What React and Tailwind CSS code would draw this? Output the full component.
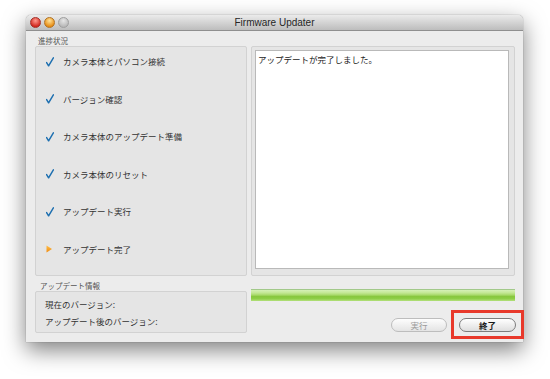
import React from "react";

const jp = "font-['Noto_Sans_CJK_JP','Liberation_Sans',sans-serif]";

const steps = [
  { label: "カメラ本体とパソコン接続", done: true },
  { label: "バージョン確認", done: true },
  { label: "カメラ本体のアップデート準備", done: true },
  { label: "カメラ本体のリセット", done: true },
  { label: "アップデート実行", done: true },
  { label: "アップデート完了", done: false },
];

const Check = () => (
  <svg width="8" height="10" viewBox="0 0 8 10" className="shrink-0">
    <path d="M0.6 5.6 L2.6 8.8 L7.4 0.8" fill="none" stroke="#1d6fb0" strokeWidth="1.5" strokeLinecap="round" strokeLinejoin="round" />
  </svg>
);

const Arrow = () => (
  <svg width="8" height="10" viewBox="0 0 8 10" className="shrink-0">
    <defs>
      <linearGradient id="tri" x1="0" y1="0" x2="0" y2="1">
        <stop offset="0" stopColor="#ffc04a" />
        <stop offset="1" stopColor="#f08a10" />
      </linearGradient>
    </defs>
    <polygon points="0.5,1.5 6,5 0.5,8.5" fill="url(#tri)" />
  </svg>
);

const Light = ({ from, to, ring }) => (
  <div
    className={`h-[11px] w-[11px] rounded-full border ${ring}`}
    style={{ background: `radial-gradient(circle at 50% 30%, ${from}, ${to} 75%)` }}
  />
);

export default function App() {
  return (
    <div className={`h-[379px] w-[550px] overflow-hidden bg-white pl-[26px] pt-[15px] ${jp}`}>
      <div className="w-[497px] h-[327px] rounded-t-[5px] bg-[#ececec] shadow-[0_8px_22px_rgba(0,0,0,0.5),0_0_1px_rgba(0,0,0,0.6)] flex flex-col">
        {/* Title bar */}
        <div className="relative h-[16px] shrink-0 rounded-t-[5px] border-b border-[#8f8f8f] bg-gradient-to-b from-[#ebebeb] to-[#bdbdbd] flex items-center justify-center">
          <div className="absolute left-[4px] top-[2px] flex gap-[3px]">
            <Light from="#ff9a8f" to="#d0251b" ring="border-[#a4312a]" />
            <Light from="#ffe39a" to="#e68a10" ring="border-[#b07225]" />
            <Light from="#e6e6e6" to="#b8b8b8" ring="border-[#9f9f9f]" />
          </div>
          <span className="font-['Liberation_Sans',sans-serif] text-[10px] leading-none text-[#262626]">Firmware Updater</span>
        </div>

        {/* Body */}
        <div className="flex flex-1 gap-[4px] pl-[9px] pr-[8px]">
          {/* Left column */}
          <div className="flex w-[212px] flex-col">
            <div className="flex h-[15px] items-end pb-[2px] pl-[3px] text-[7.5px] leading-none text-[#555]">進捗状況</div>
            <div className="h-[230px] rounded-[2px] border border-[#d2d2d2] bg-[#e5e5e5] pl-[10px] pt-[7px] flex flex-col gap-[22.5px]">
              {steps.map((s) => (
                <div key={s.label} className="flex h-[15px] items-center gap-[9px]">
                  {s.done ? <Check /> : <Arrow />}
                  <span className="text-[8.5px] leading-none text-[#333]">{s.label}</span>
                </div>
              ))}
            </div>
            <div className="flex h-[15px] items-end pb-[2px] pl-[5px] text-[7.5px] leading-none text-[#555]">アップデート情報</div>
            <div className="h-[42px] rounded-[2px] border border-[#d2d2d2] bg-[#e5e5e5] pl-[9px] pt-[8px] flex flex-col gap-[8px]">
              <span className="text-[8.5px] leading-none text-[#333]">現在のバージョン:</span>
              <span className="text-[8.5px] leading-none text-[#333]">アップデート後のバージョン:</span>
            </div>
          </div>

          {/* Right column */}
          <div className="flex w-[264px] flex-col pt-[15px]">
            <div className="h-[230px] rounded-[2px] border border-[#d2d2d2] bg-[#e5e5e5] p-[3px] pb-[6px] pr-[5px]">
              <div className="h-full border border-[#b9b9b9] bg-white px-[2px] pt-[4px] text-[8.5px] leading-none text-[#222]">
                アップデートが完了しました。
              </div>
            </div>
            <div className="mt-[13px] h-[12px] border-t border-[#a2c98a] bg-[linear-gradient(to_bottom,#d6f0b8_0%,#c4e896_25%,#a9da6c_45%,#86c63c_60%,#8fcf48_80%,#b4e07e_100%)]" />
            <div className="mt-[17px] flex items-start justify-end gap-[12px] -mr-[1px]">
              <button
                type="button"
                disabled
                className="flex h-[14px] w-[56px] items-center justify-center rounded-full border border-[#bdbdbd] bg-gradient-to-b from-[#fdfdfd] to-[#e4e4e4] text-[8.5px] leading-none text-[#9a9a9a]"
              >
                実行
              </button>
              <div className="relative flex">
                <div className="absolute -left-[8px] -right-[8px] -top-[8px] -bottom-[7px] border-[3px] border-[#e8392b]" />
                <button
                  type="button"
                  className="relative flex h-[14px] w-[57px] items-center justify-center rounded-full border border-[#7d7d7d] bg-gradient-to-b from-[#ffffff] to-[#dedede] text-[8.5px] font-semibold leading-none text-[#1a1a1a]"
                >
                  終了
                </button>
              </div>
            </div>
          </div>
        </div>
      </div>
    </div>
  );
}
